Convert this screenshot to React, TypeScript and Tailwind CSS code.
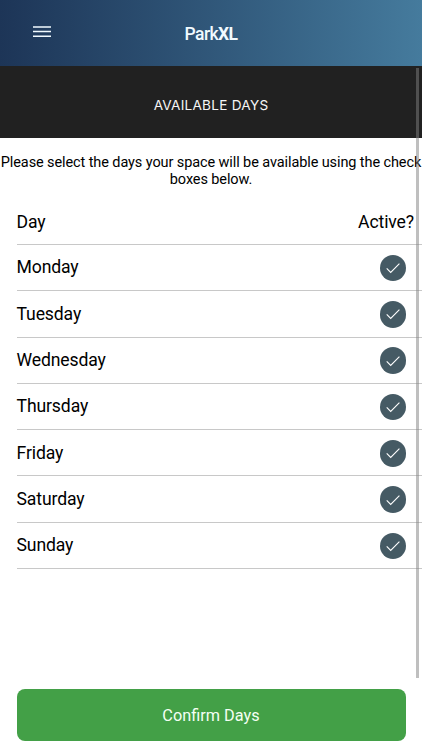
const days = ["Monday", "Tuesday", "Wednesday", "Thursday", "Friday", "Saturday", "Sunday"];

function MenuIcon() {
  return (
    <svg width="18" height="12" viewBox="0 0 18 12" fill="none" stroke="#f1faff" strokeWidth="1.5">
      <path d="M0 1.1h18M0 5.6h18M0 10.3h18" />
    </svg>
  );
}

function CheckBadge() {
  return (
    <span className="mt-px flex h-[26.5px] w-[26.5px] items-center justify-center rounded-full bg-[#455a64]">
      <svg width="14" height="12" viewBox="0 0 14 12" fill="none" stroke="#fff" strokeWidth="1.1">
        <path d="M0.7 6.3L4.7 10.4L13.4 1.6" />
      </svg>
    </span>
  );
}

export default function App() {
  return (
    <div className="relative flex h-[750px] w-[422px] flex-col overflow-hidden bg-white font-['Roboto',sans-serif] text-black">
      <header className="grid h-[65.5px] shrink-0 grid-cols-3 items-center bg-linear-to-r from-[#1d3557] to-[#457b9d]">
        <button className="ml-[33px] -mt-[2px] w-[18px]" aria-label="Menu">
          <MenuIcon />
        </button>
        <h1 className="mt-[2px] text-center text-[17.5px] font-medium tracking-[-0.6px] text-[#f1faff]">
          Park<span className="font-bold">XL</span>
        </h1>
      </header>
      <div className="flex h-[72px] shrink-0 items-center justify-center bg-[#212121] pt-[7px] font-['Inter',sans-serif] text-[13.6px] tracking-[0.25px] text-[#f5f5f5]">
        AVAILABLE DAYS
      </div>
      <p className="mt-[16px] h-[35px] shrink-0 whitespace-nowrap text-center text-[14.5px] leading-[17.2px] tracking-[-0.1px]">
        Please select the days your space will be available using the check
        <br />
        boxes below.
      </p>
      <section className="mt-[10.2px] flex flex-col pl-[16.5px]">
        <div className="flex h-[46.3px] items-center justify-between border-b border-[#c8c8c8] pr-[8px] pt-[2px] text-[17.6px] tracking-[-0.12px]">
          <span>Day</span>
          <span>Active?</span>
        </div>
        {days.map((day) => (
          <div key={day} className="flex h-[46.3px] items-center justify-between border-b border-[#c8c8c8] pr-[16px] text-[17.6px] tracking-[-0.12px]">
            <span>{day}</span>
            <CheckBadge />
          </div>
        ))}
      </section>
      <button className="mx-[16.5px] mb-[8.8px] mt-auto h-[52px] shrink-0 rounded-[8px] bg-[#43a047] pt-[2px] text-[16.3px] text-[#f4fff4]">
        Confirm Days
      </button>
      <div className="absolute right-[3px] top-[68px] h-[610px] w-[3px] bg-[#808080]/50" />
    </div>
  );
}
